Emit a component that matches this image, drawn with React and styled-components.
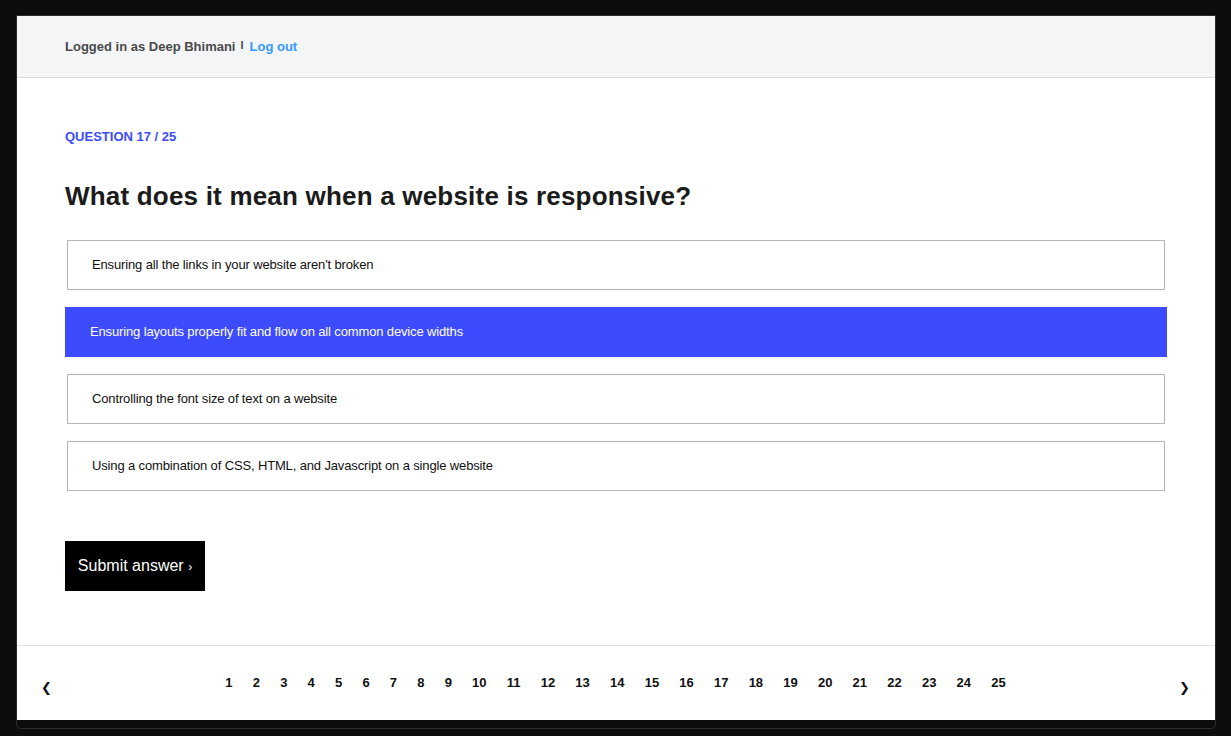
import React, { useState } from 'react';
import styled, { createGlobalStyle } from 'styled-components';

const GlobalStyle = createGlobalStyle`
    html, body { margin: 0; padding: 0; background: #0d0d0d; }
    body { font-family: "Liberation Sans", Arial, Helvetica, sans-serif; }
    * { box-sizing: border-box; }
`;

const quiz = {
    user: "Deep Bhimani",
    current: 17,
    total: 25,
    question: "What does it mean when a website is responsive?",
    options: [
        "Ensuring all the links in your website aren't broken",
        "Ensuring layouts properly fit and flow on all common device widths",
        "Controlling the font size of text on a website",
        "Using a combination of CSS, HTML, and Javascript on a single website",
    ],
};

function App() {
    const [selected, setSelected] = useState(1);
    const pages = Array.from({ length: quiz.total }, (_, i) => i + 1);

    return (
        <>
            <GlobalStyle />
            <Screen>
                <Window>
                    <Page>
                        <Header>
                            <UserText>Logged in as {quiz.user}</UserText>
                            <Divider>I</Divider>
                            <LogOut href="#">Log out</LogOut>
                        </Header>
                        <Main>
                            <Label>QUESTION {quiz.current} / {quiz.total}</Label>
                            <Question>{quiz.question}</Question>
                            <Options>
                                {quiz.options.map((opt, i) => (
                                    <Option key={i} active={i === selected} onClick={() => setSelected(i)}>
                                        {opt}
                                    </Option>
                                ))}
                            </Options>
                            <Submit>Submit answer <small>›</small></Submit>
                        </Main>
                        <Footer>
                            <Arrow>❮</Arrow>
                            <Pages>
                                {pages.map(p => <PageNum key={p}>{p}</PageNum>)}
                            </Pages>
                            <Arrow>❯</Arrow>
                        </Footer>
                    </Page>
                </Window>
            </Screen>
        </>
    );
}

const Screen = styled.div`
    width: 1231px; height: 736px;
    padding: 15px 15px 0 16px;
    background: #0d0d0d;
    overflow: hidden;
`;

const Window = styled.div`
    border: 1px solid #2c2c2c;
    border-radius: 0 0 5px 5px;
    padding-bottom: 8px;
    background: #0d0d0d;
`;

const Page = styled.div`
    background: #fff;
    height: 704px;
    display: flex;
    flex-direction: column;
`;

const Header = styled.div`
    height: 62px;
    background: #f4f5f7;
    border-bottom: 1px solid #dadada;
    display: flex;
    align-items: center;
    padding: 0 48px;
    font-size: 13px;
    font-weight: bold;
`;

const UserText = styled.span`
    color: #4a4a4a;
`;

const Divider = styled.span`
    color: #4a4a4a;
    font-size: 11px;
    margin: -4px 6px 0 5px;
`;

const LogOut = styled.a`
    color: #3399ff;
    text-decoration: none;
`;

const Main = styled.div`
    flex: 1;
    padding: 52px 48px 0;
    border-bottom: 1px solid #e2e2e2;
`;

const Label = styled.div`
    color: #3d4bff;
    font-size: 13px;
    font-weight: bold;
    line-height: 14px;
`;

const Question = styled.h1`
    margin: 36px 0 28px;
    font-size: 26px;
    line-height: 32px;
    color: #1b1b1b;
    letter-spacing: 0.2px;
`;

const Options = styled.div`
    display: flex;
    flex-direction: column;
    gap: 17px;
`;

const Option = styled.div`
    height: 50px;
    display: flex;
    align-items: center;
    font-size: 13px;
    letter-spacing: -0.14px;
    cursor: pointer;
    margin: ${p => p.active ? '0' : '0 2px'};
    padding: ${p => p.active ? '0 0 1px 25px' : '0 0 1px 24px'};
    background: ${p => p.active ? '#3d4bff' : '#fff'};
    color: ${p => p.active ? '#fff' : '#111'};
    border: ${p => p.active ? 'none' : '1px solid #b4b4b4'};
`;

const Submit = styled.button`
    margin-top: 50px;
    width: 140px; height: 50px;
    background: #000;
    color: #fff;
    border: none;
    font-family: inherit;
    font-size: 16px;
    padding: 0;
    cursor: pointer;
    small { font-size: 12px; }
`;

const Footer = styled.div`
    height: 74px;
    display: flex;
    align-items: center;
    justify-content: space-between;
    padding: 0 25px 2px 24px;
`;

const Arrow = styled.span`
    font-family: "DejaVu Sans", sans-serif;
    font-size: 13px;
    margin-top: 10px;
    color: #111;
    cursor: pointer;
`;

const Pages = styled.div`
    display: flex;
`;

const PageNum = styled.span`
    padding: 0 10.1px;
    font-size: 13px;
    font-weight: bold;
    color: #111;
    cursor: pointer;
`;

export default App;
